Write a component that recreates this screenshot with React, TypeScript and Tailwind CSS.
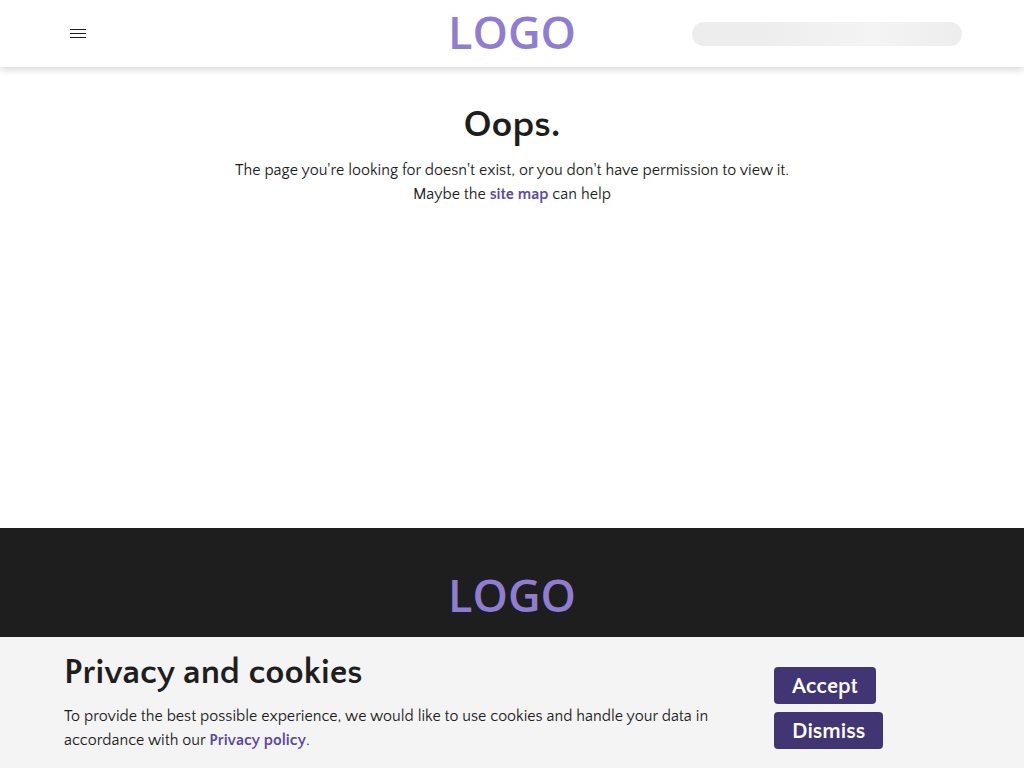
function MenuIcon() {
  return (
    <svg width="16" height="10" viewBox="0 0 16 10" fill="#1e1e1e" aria-hidden="true">
      <rect y="0" width="16" height="1" />
      <rect y="4" width="16" height="1" />
      <rect y="8" width="16" height="1" />
    </svg>
  );
}

function Logo() {
  return (
    <a
      href="/"
      className="block pb-1 font-['Open_Sans','Noto_Sans',sans-serif] text-[45px] leading-11 font-semibold text-[#8f7dd3]"
    >
      LOGO
    </a>
  );
}

function Header() {
  return (
    <header className="grid h-[67px] grid-cols-[1fr_auto_1fr] items-center bg-white px-[62px] shadow-[0_2px_8px_rgba(0,0,0,0.18)]">
      <button type="button" aria-label="Menu" className="flex size-8 items-center justify-center">
        <MenuIcon />
      </button>
      <Logo />
      <div className="h-6 w-[270px] justify-self-end rounded-full bg-linear-to-r from-[#ededed] from-25% via-[#f4f4f4] via-67% to-[#ededed]" />
    </header>
  );
}

function NotFound() {
  return (
    <main className="flex-1 px-16 pt-[33px] text-center">
      <h1 className="mb-2 text-[38px] leading-[50px] font-bold">Oops.</h1>
      <p>The page you're looking for doesn't exist, or you don't have permission to view it.</p>
      <p>
        Maybe the{" "}
        <a href="/sitemap" className="font-bold text-[#5b48a2]">
          site map
        </a>{" "}
        can help
      </p>
    </main>
  );
}

function CookieBanner() {
  return (
    <section
      aria-labelledby="cookie-title"
      className="fixed inset-x-0 bottom-0 flex items-center bg-[#f4f4f4] px-16 pt-3 pb-4"
    >
      <div className="min-w-0 flex-1 pr-10">
        <h2 id="cookie-title" className="mb-2 text-[35px] leading-[47px] font-bold">
          Privacy and cookies
        </h2>
        <p>
          To provide the best possible experience, we would like to use cookies and handle your data
          in accordance with our{" "}
          <a href="/privacy" className="font-bold text-[#5b48a2]">
            Privacy policy
          </a>
          .
        </p>
      </div>
      <div className="flex w-[186px] flex-col items-start gap-2 pt-[14px]">
        <button type="button" className="h-[37px] rounded-sm bg-[#423573] px-[18px] pt-[3px] text-[22px] leading-8 font-bold text-white">
          Accept
        </button>
        <button type="button" className="h-[37px] rounded-sm bg-[#423573] px-[18px] pt-[3px] text-[22px] leading-8 font-bold text-white">
          Dismiss
        </button>
      </div>
    </section>
  );
}

export default function App() {
  return (
    <div className="flex min-h-screen flex-col bg-white font-['Quattrocento_Sans','Lato',sans-serif] text-base leading-6 text-[#1e1e1e]">
      <Header />
      <NotFound />
      <footer className="flex h-60 justify-center bg-[#1e1e1e] pt-[45px]">
        <Logo />
      </footer>
      <CookieBanner />
    </div>
  );
}
